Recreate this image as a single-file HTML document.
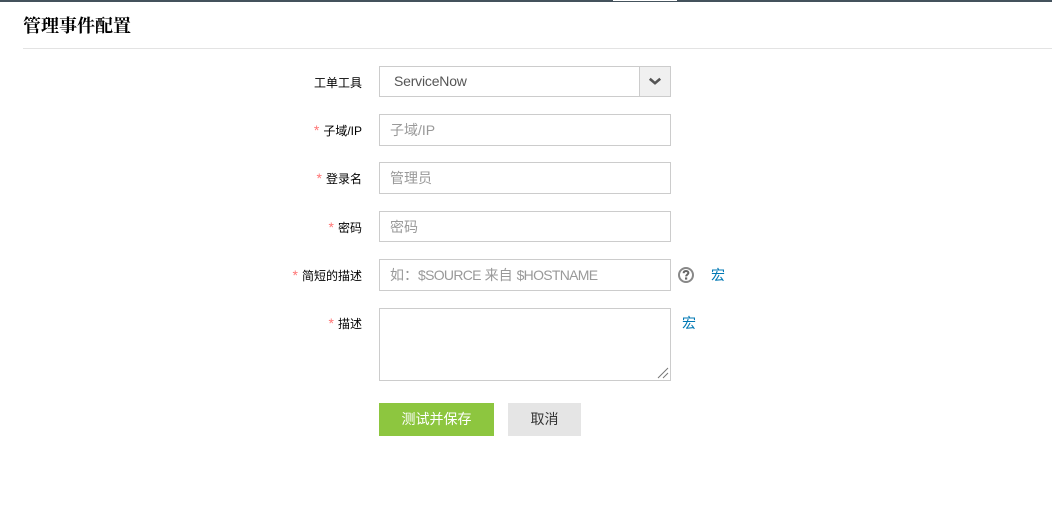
<!DOCTYPE html>
<html>
<head>
<meta charset="utf-8">
<style>
html,body{margin:0;padding:0;background:#fff;width:1052px;height:521px;overflow:hidden}
body{position:relative;font-family:"Liberation Sans","WenQuanYi Zen Hei","Noto Sans CJK SC",sans-serif}
div{position:absolute;box-sizing:border-box;white-space:nowrap}
.lab{right:690px;font-size:12px;color:#000;line-height:16px;text-align:right}
.lab i{font-style:normal;color:#f00;font-size:14px;line-height:12px;opacity:.55;margin-right:4px}
.inp{left:379px;width:292px;border:1px solid #ccc;background:#fff;font-size:14px;color:#999;line-height:30px;padding-left:10px}
.inp span{letter-spacing:-.7px}
.mac{font-size:14px;color:#0078b4;line-height:16px}
</style>
</head>
<body>
<div style="left:0;top:0;width:1052px;height:2px;background:#44525c"></div>
<div style="left:613px;top:0;width:64px;height:1px;background:#fff"></div>
<div style="left:23px;top:15px;font-size:18px;line-height:22px;font-weight:bold;color:#000;font-family:'Liberation Serif','WenQuanYi Zen Hei','Noto Serif CJK SC',serif">管理事件配置</div>
<div style="left:23px;top:48px;width:1029px;height:1px;background:#e3e3e3"></div>

<div class="lab" style="top:75px">工单工具</div>
<div class="inp" style="top:66px;height:31px;color:#555;padding-left:14px;line-height:28px;letter-spacing:-.2px">ServiceNow</div>
<div style="left:639px;top:66px;width:32px;height:31px;background:#f0f0f0;border:1px solid #ccc"></div>
<svg style="position:absolute;left:649px;top:77px" width="14" height="9" viewBox="0 0 14 9"><path d="M0.8 1.8L6 6.2L11.2 1.8" fill="none" stroke="#555" stroke-width="2.6"/></svg>

<div class="lab" style="top:123px"><i>*</i>子域/IP</div>
<div class="inp" style="top:114px;height:32px">子域/IP</div>

<div class="lab" style="top:171px"><i>*</i>登录名</div>
<div class="inp" style="top:162px;height:32px">管理员</div>

<div class="lab" style="top:220px"><i>*</i>密码</div>
<div class="inp" style="top:211px;height:31px">密码</div>

<div class="lab" style="top:268px"><i>*</i>简短的描述</div>
<div class="inp" style="top:259px;height:32px">如：<span>$SOURCE</span> 来自 <span>$HOSTNAME</span></div>
<svg style="position:absolute;left:677px;top:266px" width="18" height="18" viewBox="0 0 18 18"><circle cx="9" cy="9" r="7" fill="#fff" stroke="#888" stroke-width="2"/><path d="M6.6 7.2C6.7 5.7 7.7 5 9 5C10.4 5 11.4 5.8 11.4 7C11.4 8.5 9.1 8.6 9.1 10.4" fill="none" stroke="#666" stroke-width="2"/><rect x="8" y="11.4" width="2.2" height="2.2" fill="#666"/></svg>
<div class="mac" style="left:711px;top:267px">宏</div>

<div class="lab" style="top:316px"><i>*</i>描述</div>
<div class="inp" style="top:308px;height:73px"></div>
<svg style="position:absolute;left:657px;top:367px" width="13" height="13" viewBox="0 0 13 13"><path d="M1 11L11 1M6 11L11 6" stroke="#777" stroke-width="1" fill="none"/></svg>
<div class="mac" style="left:682px;top:315px">宏</div>

<div style="left:379px;top:403px;width:115px;height:33px;background:#8dc63f;color:#fff;font-size:14px;line-height:33px;text-align:center">测试并保存</div>
<div style="left:508px;top:403px;width:73px;height:33px;background:#e5e5e5;color:#333;font-size:14px;line-height:33px;text-align:center">取消</div>
</body>
</html>
